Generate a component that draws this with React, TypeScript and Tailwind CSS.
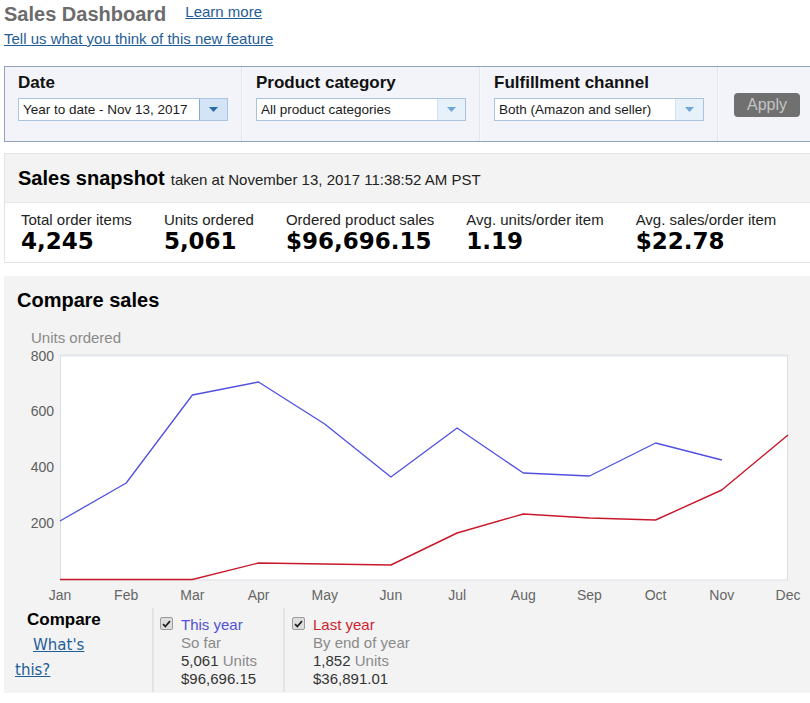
import React from 'react';

const months = ['Jan', 'Feb', 'Mar', 'Apr', 'May', 'Jun', 'Jul', 'Aug', 'Sep', 'Oct', 'Nov', 'Dec'];
const xAt = (i: number) => 60 + (i * 728) / 11;
// y positions in page pixels (0 units = 580, 800 units = 355)
const thisYear = [521, 483, 395, 382, 424, 477, 428, 473, 476, 443, 460];
const lastYear = [579.5, 579.5, 579.5, 563, 564, 565, 533, 514, 518, 520, 490, 435];

const toPoints = (ys: number[]) => ys.map((y, i) => `${xAt(i).toFixed(1)},${y}`).join(' ');

const Select = ({ value, active }: { value: string; active?: boolean }) => (
  <div className="mt-[5px] flex h-[23px] w-[210px] border border-[#aac4dd] bg-white">
    <div className="flex-1 truncate pl-[4px] text-[13.5px] leading-[21px] text-[#1a1a1a]">{value}</div>
    <div
      className={
        active
          ? 'flex w-[28px] items-center justify-center border-l border-[#86abd0] bg-[#d2e4f5]'
          : 'flex w-[28px] items-center justify-center border-l border-[#d3e3f1] bg-[#e6f1fa]'
      }
    >
      <svg width="9" height="5" viewBox="0 0 9 5">
        <path d="M0 0h9L4.5 5z" fill={active ? '#2d6ba8' : '#6ea8d9'} />
      </svg>
    </div>
  </div>
);

const Filter = ({ label, value, active }: { label: string; value: string; active?: boolean }) => (
  <div className="w-[236px] pl-[13px] pt-[6px]">
    <div className="text-[17px] font-bold leading-[20px] text-[#111]">{label}</div>
    <Select value={value} active={active} />
  </div>
);

const Metric = ({ label, value }: { label: string; value: string }) => (
  <div>
    <div className="text-[15px] leading-[17px] text-[#222]">{label}</div>
    <div className="font-['DejaVu_Sans',Verdana,sans-serif] text-[23px] font-bold leading-[26px] text-black">{value}</div>
  </div>
);

const CheckBox = () => (
  <span className="mt-[1px] flex h-[13px] w-[13px] shrink-0 items-center justify-center rounded-[2px] border border-[#9a9a9a] bg-[#dedede]">
    <svg width="9" height="8" viewBox="0 0 9 8">
      <path d="M1 4.2l2.3 2.3L8 1.2" fill="none" stroke="#222" strokeWidth="1.8" />
    </svg>
  </span>
);

const Series = ({ title, color, sub, units, sales }: { title: string; color: string; sub: string; units: string; sales: string }) => (
  <div className="flex gap-[8px]">
    <CheckBox />
    <div className="text-[15px] leading-[18px]">
      <div className={color}>{title}</div>
      <div className="text-[#8a8a8a]">{sub}</div>
      <div className="text-[#333]">
        {units} <span className="text-[#8a8a8a]">Units</span>
      </div>
      <div className="text-[#333]">{sales}</div>
    </div>
  </div>
);

const Chart = () => (
  <svg width="806" height="262" className="block">
    <g transform="translate(-4 -346)" fontFamily="'Liberation Sans', Arial, sans-serif" fontSize="14">
      <rect x="60.5" y="355.5" width="727" height="224.5" fill="#fff" stroke="#d9dee4" />
      <line x1="60" y1="355.5" x2="788" y2="355.5" stroke="#dfe4ea" strokeWidth="2" />
      {[
        ['800', 361],
        ['600', 416],
        ['400', 472],
        ['200', 528],
      ].map(([t, y]) => (
        <text key={t} x="54" y={y} textAnchor="end" fill="#5e5e5e">
          {t}
        </text>
      ))}
      {months.map((m, i) => (
        <text key={m} x={xAt(i)} y="600" textAnchor="middle" fill="#666">
          {m}
        </text>
      ))}
      <polyline points={toPoints(lastYear)} fill="none" stroke="#c8182a" strokeWidth="1.4" strokeLinejoin="round" />
      <polyline points={toPoints(thisYear)} fill="none" stroke="#5050e0" strokeWidth="1.3" strokeLinejoin="round" />
    </g>
  </svg>
);

export default function App() {
  return (
    <div className="h-[703px] w-[810px] overflow-hidden bg-white pl-[4px] font-['Liberation_Sans',Arial,sans-serif] text-[#111]">
      {/* title row */}
      <div className="flex items-start pt-[2px]">
        <h1 className="text-[20px] font-bold leading-[24px] text-[#6b6b6b]">Sales Dashboard</h1>
        <a className="ml-[19px] mt-[1px] text-[15px] leading-[17px] text-[#1f5d99] underline">Learn more</a>
      </div>
      <a className="mt-[4px] block text-[15px] leading-[18px] text-[#1f5d99] underline">
        Tell us what you think of this new feature
      </a>

      {/* filters */}
      <div className="mt-[18px] flex h-[76px] border border-r-0 border-[#8fa1bc] bg-[#f2f4f9]">
        <Filter label="Date" value="Year to date - Nov 13, 2017" active />
        <div className="w-[2px] border-l border-[#e1e5ed] bg-[#f8f9fc]" />
        <Filter label="Product category" value="All product categories" />
        <div className="w-[2px] border-l border-[#e1e5ed] bg-[#f8f9fc]" />
        <Filter label="Fulfillment channel" value="Both (Amazon and seller)" />
        <div className="w-[2px] border-l border-[#e1e5ed] bg-[#f8f9fc]" />
        <div className="pl-[15px] pt-[26px]">
          <button className="h-[24px] w-[66px] rounded-[4px] bg-[#707070] text-[16px] leading-[24px] text-[#c4c4c4]">Apply</button>
        </div>
      </div>

      {/* snapshot */}
      <div className="mt-[11px] border border-r-0 border-[#e3e3e3]">
        <div className="h-[49px] border-b border-[#e6e6e6] bg-[#f3f3f3] pl-[13px] pt-[12px] leading-[24px]">
          <span className="text-[20px] font-bold text-black">Sales snapshot</span>
          <span className="ml-[6px] text-[15px] text-[#222]">taken at November 13, 2017 11:38:52 AM PST</span>
        </div>
        <div className="flex h-[59px] gap-8 pl-[16px] pt-[8px]">
          <Metric label="Total order items" value="4,245" />
          <Metric label="Units ordered" value="5,061" />
          <Metric label="Ordered product sales" value="$96,696.15" />
          <Metric label="Avg. units/order item" value="1.19" />
          <Metric label="Avg. sales/order item" value="$22.78" />
        </div>
      </div>

      {/* compare sales */}
      <div className="mt-[13px] h-[417px] bg-[#f3f3f3]">
        <div className="pl-[13px] pt-[12px] text-[20px] font-bold leading-[24px] text-black">Compare sales</div>
        <div className="mt-[17px] pl-[27px] text-[15px] leading-[17px] text-[#8a8a8a]">Units ordered</div>
        <Chart />
        <div className="flex h-[84px]">
          <div className="w-[148px] pl-[11px] pt-[2px]">
            <div className="pl-[12px] text-[17px] font-bold leading-[20px] text-black">Compare</div>
            <a className="mt-[3px] block indent-[18px] font-['DejaVu_Sans',Verdana,sans-serif] text-[15px] leading-[25px] text-[#1f5d99] underline">
              What's
              <br />
              this?
            </a>
          </div>
          <div className="w-[2px] bg-[#e4e4e4]" />
          <div className="w-[129px] pl-[6px] pt-[8px]">
            <Series title="This year" color="text-[#5050d8]" sub="So far" units="5,061" sales="$96,696.15" />
          </div>
          <div className="w-[2px] bg-[#e4e4e4]" />
          <div className="pl-[7px] pt-[8px]">
            <Series title="Last year" color="text-[#cc1f2f]" sub="By end of year" units="1,852" sales="$36,891.01" />
          </div>
        </div>
      </div>
    </div>
  );
}
